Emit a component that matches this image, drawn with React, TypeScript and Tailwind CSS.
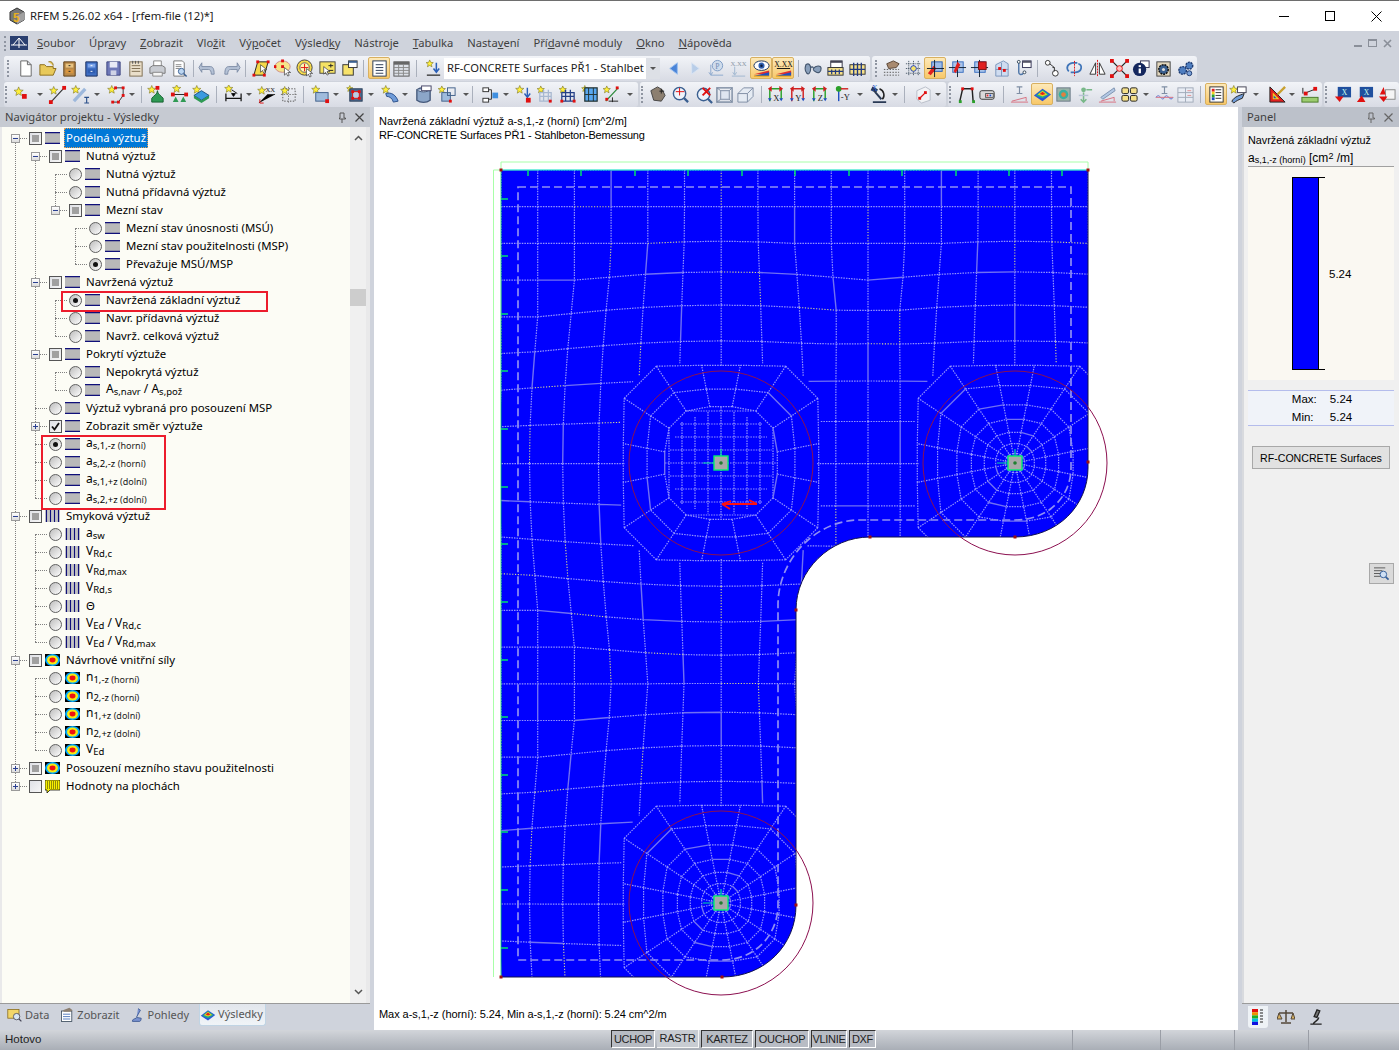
import type { ReactNode } from 'react';

const star = (cx: number, cy: number, r = 4) => {
  const pts: string[] = [];
  for (let i = 0; i < 10; i++) {
    const a = -Math.PI / 2 + (i * Math.PI) / 5;
    const d = i % 2 ? r * 0.45 : r;
    pts.push(`${(cx + d * Math.cos(a)).toFixed(1)},${(cy + d * Math.sin(a)).toFixed(1)}`);
  }
  return pts.join(' ');
};
const St = ({ x = 5, y = 5, r = 4 }: { x?: number; y?: number; r?: number }) => (
  <polygon points={star(x, y, r)} fill="#fff03a" stroke="#77701e" strokeWidth=".6" />
);
const Rd = ({ x, y, s = 3 }: { x: number; y: number; s?: number }) => <rect x={x - s / 2} y={y - s / 2} width={s} height={s} fill="#e01010" />;
const Cur = ({ x = 11, y = 10 }: { x?: number; y?: number }) => (
  <path d={`M${x} ${y}l0 8 2-2 1.5 3 1.5-.8-1.5-3h3z`} fill="#fff" stroke="#333" strokeWidth=".7" />
);
const Label = ({ t, x = 10, y = 9, c = '#222', s = 7 }: { t: string; x?: number; y?: number; c?: string; s?: number }) => (
  <text x={x} y={y} textAnchor="middle" fontSize={s} fontFamily="Liberation Serif, serif" fill={c}>{t}</text>
);
const Frame = ({ c = '#3a6fc0' }: { c?: string }) => (
  <>
    <rect x="5" y="3" width="11" height="11" fill="#a9c4ea" stroke={c} />
    <path d="M10 1v18M1 9h18" stroke="#123" strokeWidth="1" />
  </>
);
const Bars = ({ c = '#e8a100' }: { c?: string }) => (
  <>
    <path d="M2 16L18 12V16H2Z" fill="#e03030" />
    <path d="M2 18L18 14V18H2Z" fill="#2050c0" />
    <path d="M2 18H18" stroke={c} />
  </>
);
const Axis = ({ t, up = '#2aa02a', side = '#d02020' }: { t: string; up?: string; side?: string }) => (
  <>
    <path d="M4 17V4M4 4H16M16 4V15" stroke={up} strokeWidth="1.5" fill="none" />
    <path d="M2 4l4-3v6zM18 4l-4-3v6z" fill={side} />
    <path d="M4 17l-2-3h4zM16 17l-2-3h4z" fill="#2050c0" />
    <Label t={t} x={11} y={17} s={9} />
  </>
);
const Contour = () => (
  <>
    <path d="M1 11L10 4L19 10L10 17Z" fill="#2a55d8" />
    <path d="M3 11L10 5L17 10L10 14Z" fill="#20b080" />
    <path d="M5 10L10 6L15 10L10 12Z" fill="#f0d020" />
    <path d="M7 9.5L10 7L13 9.5L10 10.5Z" fill="#e02020" />
  </>
);

const ICONS: Record<string, ReactNode> = {
  doc: <path d="M5 2h7l4 4v12H5zM12 2v4h4" fill="#fff" stroke="#666" />,
  folder: <path d="M2 17V6h5l2 2h7v2h3l-3 7zM16 7c0-3-2-5-5-4" fill="#e8c95a" stroke="#8a6d1e" />,
  cabBrown: <><path d="M4 3h12v15H4z" fill="#b98a4a" stroke="#5c3c15" /><rect x="6" y="5" width="8" height="4" fill="#e8c483" /><rect x="6" y="11" width="8" height="4" fill="#d9963f" /><path d="M9 7h2M9 13h2" stroke="#222" /></>,
  cabBlue: <><path d="M4 3h12v15H4z" fill="#3f6fc4" stroke="#1a2f60" /><rect x="6" y="5" width="8" height="4" fill="#7ea6ea" /><rect x="6" y="11" width="8" height="4" fill="#2f5db0" /><path d="M9 7h2M9 13h2" stroke="#fff" /></>,
  save: <><path d="M3 3h14v14H3z" fill="#6e78b8" stroke="#3e4680" /><rect x="6" y="3" width="8" height="6" fill="#e8eaf6" /><rect x="7" y="12" width="6" height="5" fill="#cfd3e6" /></>,
  notes: <><rect x="4" y="3" width="13" height="15" fill="#eadfca" stroke="#7d6d50" /><path d="M6 7h9M6 10h9M6 13h9" stroke="#7d6d50" /><path d="M7 2v3M10 2v3M13 2v3" stroke="#555" /></>,
  print: <><path d="M6 2h8v6H6z" fill="#fff" stroke="#888" /><path d="M2 9l3-2h10l3 2v6H2z" fill="#c9ccd2" stroke="#777" /><path d="M5 14h10v4H5z" fill="#f5f5f5" stroke="#888" /></>,
  preview: <><path d="M4 2h9l2 2v14H4z" fill="#fff" stroke="#777" /><path d="M6 6h6M6 8h6M6 10h4" stroke="#888" /><circle cx="12" cy="13" r="3.2" fill="#bcd6f2" stroke="#3a5f90" /><path d="M14.5 15.5l3 3" stroke="#3a5f90" strokeWidth="1.6" /></>,
  undo: <path d="M4 8h9c3 0 4 3 4 8h-3c0-3-1-5-3-5H4v3L1 9l3-5z" fill="#b5c2d6" stroke="#7d8ca5" />,
  redo: <path d="M16 8H7c-3 0-4 3-4 8h3c0-3 1-5 3-5h7v3l3-5-3-5z" fill="#b5c2d6" stroke="#7d8ca5" />,
  para: <><path d="M6 3h11l-4 14H2z" fill="#f5d94a" stroke="#222" /><Rd x={6} y={3} /><Rd x={17} y={3} /><Rd x={2} y={17} /><Rd x={13} y={17} /><Cur x={9} y={6} /></>,
  ell: <><ellipse cx="9" cy="8" rx="8" ry="6" fill="#f5e58a" stroke="#c88" /><Rd x={9} y={2} /><Rd x={1} y={8} /><Rd x={9} y={8} /><Cur x={11} y={9} /></>,
  target: <><circle cx="9" cy="9" r="8" fill="#f5d94a" stroke="#444" /><circle cx="9" cy="9" r="5" fill="#fff6b0" stroke="#666" /><path d="M5 9h8M9 5v8" stroke="#e01010" /><Cur x={11} y={10} /></>,
  notePlus: <><rect x="2" y="3" width="16" height="12" fill="#f5e263" stroke="#444" /><path d="M11 7h5M13.5 5v4M11 12h5" stroke="#222" /><Cur x={6} y={8} /></>,
  winY: <><rect x="3" y="6" width="11" height="11" fill="#f7e26b" stroke="#333" /><rect x="9" y="2" width="9" height="7" fill="#fff" stroke="#333" /><rect x="9" y="2" width="9" height="2" fill="#3a5f90" /></>,
  list: <><rect x="3" y="2" width="14" height="16" fill="#fff" stroke="#2a3a55" /><path d="M6 6h8M6 9h8M6 12h8M6 15h8" stroke="#2a3a55" /></>,
  table: <><rect x="2" y="3" width="16" height="15" fill="#dde1e8" stroke="#555" /><rect x="2" y="3" width="16" height="3" fill="#666" /><path d="M2 9h16M2 12h16M2 15h16M7 6v12M12 6v12" stroke="#888" /></>,
  starDown: <><St x={6} y={5} /><path d="M13 4v9M10 10l3 4 3-4" stroke="#2a5fb8" strokeWidth="1.6" fill="none" /><path d="M3 17h14" stroke="#333" strokeWidth="1.4" /></>,
  triL: <path d="M13 4v12L5 10z" fill="#4a84d8" stroke="#9cc0ee" />,
  triR: <path d="M7 4v12l8-6z" fill="#b8cde8" stroke="#d8e4f2" />,
  pDown: <><circle cx="11" cy="7" r="5.5" fill="#cfdcec" stroke="#7d9cc4" /><Label t="P" x={11} y={10} c="#6f8cb5" s={8} /><path d="M4 6v10M2 14l2 3 2-3M4 17h13" stroke="#8aa8cc" fill="none" /></>,
  xxPale: <><Label t="X.XX" y={7} c="#8c98a8" s={7} /><path d="M6 8v8M4 14l2 3 2-3M3 18h14" stroke="#9fb6d0" fill="none" /></>,
  eye: <><ellipse cx="10" cy="7" rx="8" ry="5" fill="#fff" stroke="#16305f" /><circle cx="10" cy="7" r="3.2" fill="#2f5fb0" /><circle cx="10" cy="7" r="1.3" fill="#0a1a3a" /><Bars /></>,
  xxHl: <><Label t="X.XX" y={8} c="#111" s={8} /><path d="M3 10h14" stroke="#111" /><Bars /></>,
  glasses: <path d="M2 6c3-2 5 0 5 4s-2 7-4 5-2-6-1-9zM10 10c2-3 8-4 8 0s-3 5-5 4-4-2-3-4zM7 9c1-1 2-1 3 0" fill="#8aa0bc" stroke="#45576f" strokeWidth="1.2" />,
  winBlocks: <><rect x="5" y="2" width="12" height="7" fill="#fff" stroke="#334" /><rect x="5" y="2" width="12" height="2" fill="#445" /><rect x="2" y="9" width="16" height="8" fill="#f5e08a" stroke="#333" /><path d="M6 11v5M10 11v5M14 11v5M2 13h16" stroke="#223a80" strokeWidth="1.3" /></>,
  blocks: <><rect x="2" y="6" width="16" height="10" fill="#f5e08a" stroke="#333" /><path d="M6 4v14M10 4v14M14 4v14M2 11h16" stroke="#223a80" strokeWidth="1.4" /></>,
  handGrid: <><path d="M5 5l7-3 6 3-3 4-8 1z" fill="#a88a70" stroke="#5a4636" /><path d="M2 11h16M2 14h16M2 17h16" stroke="#555" strokeDasharray="1.5 1.5" /></>,
  sunGrid: <><path d="M2 5h16M2 10h16M2 15h16M5 2v16M10 2v16M15 2v16" stroke="#345" strokeDasharray="1 1" /><circle cx="10" cy="10" r="3" fill="#f5e26b" stroke="#2040c0" /></>,
  frameA: <><rect x="6" y="3" width="11" height="10" fill="#9dbde8" stroke="#2a5fb8" /><path d="M2 15l6-8 3 3-6 7z" fill="#e02020" /><path d="M9 1v18M1 10h18" stroke="#123" /></>,
  frameB: <><Frame /><path d="M6 13l4-10 3 3-5 9z" fill="#e02020" /></>,
  frameC: <><Frame /><rect x="9" y="3" width="8" height="8" fill="#e02020" stroke="#801010" /></>,
  gridRed: <><path d="M4 6l8-4 5 3v13H4z" fill="#cfdcf0" stroke="#7a96bc" /><path d="M4 11h13M10 4v14" stroke="#7a96bc" /><Rd x={8} y={10} /><Rd x={13} y={12} /></>,
  chainWin: <><rect x="9" y="2" width="9" height="7" fill="#fff" stroke="#335" /><rect x="9" y="2" width="9" height="2" fill="#556" /><path d="M5 4v10M5 14c0 3 3 3 5 1" stroke="#4f76a8" strokeWidth="1.5" fill="none" /><circle cx="5" cy="3" r="1.5" fill="#fff" stroke="#345" /><circle cx="11" cy="14" r="1.5" fill="#fff" stroke="#345" /></>,
  chain: <><circle cx="5" cy="4" r="2.5" fill="#fff" stroke="#333" /><circle cx="13" cy="15" r="3" fill="#fff" stroke="#333" /><path d="M7 5l5 4v4M10 9l2 0" stroke="#333" fill="none" /></>,
  rotate: <><path d="M14 5c4 1 5 8-3 9H6M4 13c-3-3-2-8 4-9h5" stroke="#3f74b8" strokeWidth="1.8" fill="none" /><path d="M10 2v16" stroke="#e01010" strokeDasharray="2 1" /></>,
  mirror: <><path d="M8 4L2 16h6zM12 4l6 12h-6z" fill="#fff" stroke="#333" /><path d="M10 1v18" stroke="#e01010" strokeDasharray="2 1" /></>,
  xNodes: <><path d="M2 2l16 16M18 2L2 18" stroke="#222" strokeWidth="1.3" /><circle cx="10" cy="10" r="3" fill="#fbb" stroke="#e01010" /><Rd x={2} y={2} s={4} /><Rd x={18} y={2} s={4} /><Rd x={2} y={18} s={4} /><Rd x={18} y={18} s={4} /></>,
  info: <><rect x="9" y="2" width="9" height="7" fill="#fff" stroke="#335" /><circle cx="8" cy="11" r="7" fill="#14275e" /><rect x="7" y="10" width="2.4" height="5" fill="#fff" /><rect x="7" y="6.5" width="2.4" height="2" fill="#fff" /></>,
  gearBox: <><rect x="3" y="3" width="14" height="15" fill="#e2d6bd" stroke="#444" /><circle cx="10" cy="11" r="5" fill="#3a5f90" stroke="#111" strokeWidth="1.5" strokeDasharray="2 1" /><circle cx="10" cy="11" r="1.6" fill="#ddd" /></>,
  gears: <><circle cx="7" cy="12" r="4" fill="#4f7ec0" stroke="#1e3a70" strokeWidth="1.5" strokeDasharray="2 1" /><circle cx="14" cy="7" r="3.6" fill="#4f7ec0" stroke="#1e3a70" strokeWidth="1.5" strokeDasharray="2 1" /><circle cx="14" cy="15" r="2.6" fill="#7aa0d8" stroke="#1e3a70" /></>,
  node: <><St x={7} y={7} r={5} /><Rd x={13} y={12} s={5} /></>,
  line: <><St x={6} y={6} r={4.5} /><path d="M4 17L16 4" stroke="#333" strokeWidth="1.2" /><Rd x={3} y={18} s={4} /><Rd x={17} y={3} s={4} /></>,
  lineI: <><St x={5} y={5} r={4.5} /><path d="M3 17L15 4" stroke="#9db8dc" strokeWidth="3.5" /><path d="M14 13h5M14 19h5M16.5 13v6" stroke="#2a4f8a" strokeWidth="1.2" /></>,
  poly: <><St x={5} y={5} r={4.5} /><path d="M9 3h8v8l-5 7H6" stroke="#333" fill="none" /><Rd x={9} y={3} /><Rd x={17} y={3} /><Rd x={17} y={11} /><Rd x={12} y={18} /><Rd x={6} y={18} /></>,
  support: <><St x={5} y={5} r={4.5} /><Rd x={11} y={3} s={4} /><path d="M11 6c0 4-4 5-6 8v4h12v-4c-2-3-6-4-6-8z" fill="#2f9a54" stroke="#14602f" /></>,
  supports2: <><St x={7} y={4} r={4.5} /><path d="M3 10h14" stroke="#222" /><Rd x={3} y={10} s={4} /><Rd x={17} y={10} s={4} /><path d="M6 12l3 6H3zM14 12l3 6h-6z" fill="#2f9a54" /></>,
  foundation: <><St x={5} y={5} r={4.5} /><path d="M2 11l8-5 8 5-8 5z" fill="#3a9ae0" stroke="#1a4f80" /><path d="M2 11v3l8 5 8-5v-3l-8 5z" fill="#2f9a54" /></>,
  dim: <><St x={5} y={4} r={4.5} /><path d="M2 9v8M18 9v8M2 14h16" stroke="#111" strokeWidth="1.3" /><path d="M8 9l4 0-2 3zM8 5l6 4" stroke="#111" /></>,
  dimXX: <><St x={5} y={6} r={4.5} /><Label t="XX" x={14} y={7} s={7} /><path d="M2 19l9-9h8" stroke="#333" /><path d="M3 15v4h4" stroke="#e01010" fill="none" /></>,
  gridStar: <><rect x="4" y="4" width="13" height="13" fill="none" stroke="#555" strokeDasharray="1.5 1.5" /><path d="M10 2v17M2 10h17" stroke="#777" strokeDasharray="1.5 1.5" /><St x={6} y={6} r={4.5} /></>,
  rectStar: <><St x={5} y={5} r={4.5} /><rect x="5" y="8" width="13" height="9" fill="#9fbbdc" stroke="#40608a" /><Rd x={17} y={17} s={4} /></>,
  frameRed: <><St x={4} y={4} r={3.5} /><rect x="4" y="4" width="13" height="13" fill="#4c6a90" stroke="#253a55" /><rect x="7" y="7" width="7" height="7" fill="#b9cee6" stroke="#e01010" /><Rd x={7} y={7} /><Rd x={14} y={7} /><Rd x={7} y={14} /><Rd x={14} y={14} /></>,
  curve: <><St x={5} y={5} r={4.5} /><path d="M5 9c6-2 11 2 13 8l-5 1C12 14 9 12 6 12z" fill="#6f9bd8" stroke="#2a4f8a" /></>,
  cube: <><path d="M3 5c4-3 10-3 14 0v11c-4 3-10 3-14 0z" fill="#8ca6c8" stroke="#44587a" strokeWidth="1.4" /><path d="M3 5c4 3 10 3 14 0" fill="#dfe7f2" stroke="#44587a" /><rect x="8" y="1" width="10" height="5" fill="#fff" stroke="#446" /></>,
  cubeStar: <><St x={4} y={5} r={4} /><rect x="4" y="8" width="9" height="9" fill="#9fbbdc" stroke="#40608a" /><rect x="10" y="3" width="8" height="8" fill="none" stroke="#40608a" /><Rd x={13} y={17} /></>,
  arrowsBox: <><rect x="2" y="3" width="6" height="4" fill="#fff" stroke="#333" /><rect x="2" y="14" width="6" height="4" fill="#fff" stroke="#333" /><rect x="12" y="8" width="6" height="6" fill="#3f8fe0" /><path d="M8 5h3v10H8" stroke="#333" fill="none" /></>,
  starDownR: <><St x={5} y={5} r={4.5} /><path d="M13 3v9M10 9l3 4 3-4" stroke="#2a5fb8" strokeWidth="1.5" fill="none" /><Rd x={14} y={16} s={5} /></>,
  framePale: <><St x={5} y={5} r={4} /><path d="M4 8h12v9H4zM8 5v12M13 5v12M4 12h12" stroke="#a8b8d0" fill="none" strokeWidth="1.3" /><Rd x={15} y={17} s={3} /></>,
  frameS: <><St x={5} y={5} r={4} /><path d="M4 8h13v9H4zM8 5v12M13 5v12M4 12h13" stroke="#243f86" fill="none" strokeWidth="1.3" /><Rd x={4} y={17} /><Rd x={17} y={17} /></>,
  frameSky: <><St x={4} y={4} r={3.5} /><rect x="4" y="3" width="13" height="14" fill="#59a8f0" stroke="#233" strokeWidth="1.3" /><path d="M8 3v14M13 3v14M4 10h13" stroke="#233" /></>,
  xyStar: <><St x={5} y={5} r={4} /><path d="M4 17L17 3" stroke="#2a8a3a" strokeWidth="1.3" /><Rd x={16} y={3} /><path d="M7 17h10M11 13v5" stroke="#222" /><Rd x={5} y={15} /></>,
  handPale: <><path d="M3 6l7-4 5 3 3 6-4 6-8-1z" fill="#8c7f70" stroke="#444" /><path d="M14 4v5M12 6.5h5" stroke="#222" /></>,
  zoomP: <><circle cx="9" cy="9" r="6.5" fill="#eef4fb" stroke="#3a5f90" strokeWidth="1.5" /><path d="M13.5 13.5L18 18" stroke="#3a5f90" strokeWidth="2.4" /><path d="M5 7h9M9 3v8" stroke="#e01010" /></>,
  zoomX: <><circle cx="9" cy="10" r="6.5" fill="#eef4fb" stroke="#3a5f90" strokeWidth="1.5" /><path d="M13.5 14.5L18 19" stroke="#3a5f90" strokeWidth="2.4" /><path d="M8 3l8 8M16 3l-8 8" stroke="#e01010" strokeWidth="2" /></>,
  box: <><rect x="2" y="3" width="16" height="15" fill="none" stroke="#7f8ea4" strokeWidth="1.5" /><rect x="6" y="6" width="9" height="9" fill="#dfe6f0" stroke="#7f8ea4" /><path d="M2 3l4 3M18 3l-3 3M2 18l4-3M18 18l-3-3" stroke="#7f8ea4" /></>,
  box2: <><path d="M2 9h10v9H2zM2 9l6-6h10v9l-6 6M12 9l6-6" fill="#e5ebf3" stroke="#7f8ea4" /></>,
  aX: <Axis t="X" />,
  aY: <Axis t="Y" up="#d02020" side="#d02020" />,
  aZ: <Axis t="Z" up="#2aa02a" side="#d02020" />,
  aMY: <><path d="M6 17V5" stroke="#2050c0" strokeWidth="1.5" /><circle cx="6" cy="4" r="3" fill="#2aa02a" /><path d="M8 4h8" stroke="#d02020" strokeWidth="1.5" /><Label t="-Y" x={13} y={16} s={9} /></>,
  micro: <><path d="M3 3l4 2-1 2-4-2zM5 7l7 8M3 18h14" stroke="#2a3a55" strokeWidth="2" /><path d="M10 4c5 2 6 8 3 11" stroke="#222" strokeWidth="1.6" fill="none" /><Label t="X" x={5} y={6} c="#2a5fd0" s={8} /></>,
  boxPale: <><path d="M3 6l9-4 5 3v11l-9 3-5-4z" fill="#f2f3f6" stroke="#b8bec8" /><path d="M6 14l6-6" stroke="#e01010" strokeWidth="1.3" /><Rd x={12} y={8} /><Rd x={6} y={14} /></>,
  legs: <><path d="M4 17L7 4h10l1 13" stroke="#222" strokeWidth="1.5" fill="none" /><Rd x={7} y={4} /><Rd x={17} y={4} /><rect x="3" y="16" width="3" height="3" fill="#2aa02a" /><rect x="17" y="16" width="3" height="3" fill="#2aa02a" /></>,
  cam: <><rect x="2" y="6" width="15" height="9" rx="2" fill="#d9d9d9" stroke="#333" /><rect x="8" y="9" width="8" height="4" fill="#f0f0f0" stroke="#555" /><rect x="9" y="10" width="2" height="2" fill="#e03030" /><rect x="12" y="10" width="2" height="2" fill="#2050c0" /></>,
  dimPale: <><path d="M7 2h6M7 9h6M10 2v7" stroke="#7f8ea4" strokeWidth="1.2" /><path d="M1 18h18M2 17l15-4v4" stroke="#d87080" fill="none" /></>,
  surface: <Contour />,
  cubeColor: <><rect x="3" y="3" width="14" height="14" fill="#9ab3a8" stroke="#6b7a88" /><circle cx="10" cy="10" r="5" fill="#3ab0a0" /><circle cx="10" cy="10" r="2.5" fill="#e08040" /></>,
  arrowsG: <><circle cx="9" cy="5" r="2.5" fill="#79b889" /><path d="M9 8v10M6 15l3 3 3-3M12 5h6" stroke="#79b889" strokeWidth="1.6" fill="none" /><path d="M4 11h10" stroke="#b8c4d4" strokeWidth="1.5" /></>,
  lineR: <><path d="M3 13L17 3l1 3L5 15z" fill="#b3c8e4" stroke="#7d92b0" /><path d="M1 18h18M3 17l14-4v4" stroke="#d87080" fill="none" /></>,
  squares: <><rect x="2" y="3" width="7" height="6" rx="1.5" fill="#f5e08a" stroke="#222" /><rect x="11" y="3" width="7" height="6" rx="1.5" fill="#f5e08a" stroke="#222" /><rect x="2" y="11" width="7" height="6" rx="1.5" fill="#f5e08a" stroke="#222" /><rect x="11" y="11" width="7" height="6" rx="1.5" fill="#f5e08a" stroke="#222" /></>,
  wave: <><path d="M7 2h6M7 9h6M10 2v7" stroke="#7f8ea4" strokeWidth="1.2" /><path d="M1 13c4-6 6 6 9 0s6 6 9 0" stroke="#5a6fd0" fill="none" /><path d="M1 13h18" stroke="#d87080" /></>,
  tablePale: <><rect x="2" y="3" width="16" height="15" fill="#e8ecf4" stroke="#a0aab8" /><path d="M2 8h16M2 13h16M10 3v15" stroke="#a0aab8" /><path d="M12 6h4M12 11h4" stroke="#e09090" /></>,
  listColor: <><rect x="3" y="2" width="14" height="16" fill="#fff" stroke="#333" /><rect x="5" y="4" width="3" height="3" fill="#e02020" /><rect x="5" y="7" width="3" height="3" fill="#f0d020" /><rect x="5" y="10" width="3" height="3" fill="#2aa02a" /><rect x="5" y="13" width="3" height="3" fill="#2050c0" /><path d="M9 5h6M9 8h6M9 11h6M9 14h6" stroke="#333" /></>,
  starWin: <><St x={5} y={5} r={4.5} /><rect x="9" y="2" width="9" height="6" fill="#fff" stroke="#445" /><path d="M3 17c3-5 8-6 13-8l-2 5c-3 1-7 3-9 5z" fill="#6f9bd8" stroke="#222" /></>,
  rainbow: <><path d="M2 2v16h16z" fill="#e02020" stroke="#222" /><path d="M5 8v7h7z" fill="#f0d020" /><path d="M6 11v3h3z" fill="#2050c0" /><path d="M10 10l8-8" stroke="#c8a030" strokeWidth="2.5" /></>,
  ruler: <><path d="M4 9L17 4" stroke="#222" /><Rd x={6} y={9} s={4} /><Rd x={16} y={4} s={4} /><path d="M3 3v6" stroke="#222" /><rect x="2" y="13" width="17" height="5" fill="#9ccc6f" stroke="#4a7a2a" /></>,
  nodeA: <><rect x="5" y="2" width="14" height="11" fill="#1f4f9e" /><Label t="X" x={12} y={10} c="#cfe" s={8} /><path d="M2 12h9l-4 6z" fill="#e01010" /></>,
  nodeB: <><rect x="5" y="2" width="14" height="11" fill="#1f4f9e" /><Label t="X" x={12} y={10} c="#cfe" s={8} /><path d="M2 18h9l-4-7z" fill="#e01010" /></>,
  nodeC: <><rect x="9" y="5" width="10" height="10" fill="#f5f5f5" stroke="#888" /><path d="M7 2l2 8H3zM2 12h9l-4 6z" fill="#e01010" /></>,
};

type Item = [number, string];

// x is the centre of the item on the page
function Strip({ start, end, items }: { start: number; end: number; items: Item[] }) {
  let cursor = start;
  return (
    <div className="flex h-[25px] items-center rounded-[3px] bg-linear-to-b from-[#f2f4f8] to-[#d8dbe4]" style={{ width: end - start }}>
      {items.map(([x, name], i) => {
        const w = name === 'sep' ? 1 : name === 'grip' ? 2 : name === 'caret' ? 6 : 22;
        const ml = x - w / 2 - cursor;
        cursor = x + w / 2;
        if (name === 'sep') return <div key={i} className="h-[17px] w-px shrink-0 bg-[#aab0bc]" style={{ marginLeft: ml }} />;
        if (name === 'grip') return <div key={i} className="h-[17px] w-[2px] shrink-0 border-l-2 border-dotted border-[#8f95a1]" style={{ marginLeft: ml }} />;
        if (name === 'caret') return <div key={i} className="h-0 w-0 shrink-0 border-x-[3px] border-t-[3px] border-x-transparent border-t-[#555]" style={{ marginLeft: ml }} />;
        const hl = name.startsWith('*');
        const key = hl ? name.slice(1) : name;
        return (
          <div
            key={i}
            className={hl
              ? 'flex h-[22px] w-[22px] shrink-0 items-center justify-center rounded-[2px] border border-[#d8b060] bg-linear-to-b from-[#fde9b8] to-[#f8c868]'
              : 'flex h-[22px] w-[22px] shrink-0 items-center justify-center'}
            style={{ marginLeft: ml }}
          >
            <svg viewBox="0 0 20 20" className="h-[19px] w-[19px]" strokeWidth="1">{ICONS[key]}</svg>
          </div>
        );
      })}
    </div>
  );
}

const ROW1A: Item[] = [[8, 'grip'], [25, 'doc'], [47, 'folder'], [69, 'cabBrown'], [91, 'cabBlue'], [113, 'save'], [135, 'notes'], [157, 'print'], [179, 'preview'], [193, 'sep'], [207, 'undo'], [231, 'redo'], [245, 'sep'], [261, 'para'], [283, 'ell'], [305, 'target'], [327, 'notePlus'], [349, 'winY'], [363, 'sep'], [379, '*list'], [401, 'table'], [416, 'sep']];
const ROW1A2: Item[] = [[674, 'triL'], [694, 'triR'], [716, 'pDown'], [738, 'xxPale'], [761, '*eye'], [783, '*xxHl'], [798, 'sep'], [813, 'glasses'], [835, 'winBlocks'], [857, 'blocks']];
const ROW1B: Item[] = [[876, 'grip'], [891, 'handGrid'], [913, 'sunGrid'], [935, '*frameA'], [957, 'frameB'], [979, 'frameC'], [1001, 'gridRed'], [1023, 'chainWin'], [1037, 'sep'], [1052, 'chain'], [1074, 'rotate'], [1097, 'mirror'], [1119, 'xNodes'], [1141, 'info'], [1163, 'gearBox'], [1185, 'gears']];
const ROW2A: Item[] = [[6, 'grip'], [21, 'node'], [40, 'caret'], [57, 'line'], [80, 'lineI'], [97, 'caret'], [116, 'poly'], [132, 'caret'], [141, 'sep'], [156, 'support'], [179, 'supports2'], [201, 'foundation'], [216, 'sep'], [233, 'dim'], [249, 'caret'], [266, 'dimXX'], [288, 'gridStar'], [303, 'sep'], [320, 'rectStar'], [336, 'caret'], [355, 'frameRed'], [371, 'caret'], [390, 'curve'], [405, 'caret'], [423, 'cube'], [447, 'cubeStar'], [466, 'caret'], [472, 'sep'], [490, 'arrowsBox'], [506, 'caret'], [524, 'starDownR'], [545, 'framePale'], [567, 'frameS'], [590, 'frameSky'], [611, 'xyStar'], [630, 'caret']];
const ROW2B: Item[] = [[642, 'grip'], [657, 'handPale'], [680, 'zoomP'], [704, 'zoomX'], [724, 'box'], [745, 'box2'], [761, 'sep'], [775, 'aX'], [797, 'aY'], [819, 'aZ'], [842, 'aMY'], [860, 'caret'], [879, 'micro'], [895, 'caret'], [904, 'sep'], [923, 'boxPale'], [938, 'caret']];
const ROW2C: Item[] = [[950, 'grip'], [965, 'legs'], [987, 'cam'], [1003, 'sep'], [1019, 'dimPale'], [1042, '*surface'], [1063, 'cubeColor'], [1084, 'arrowsG'], [1107, 'lineR'], [1129, 'squares'], [1146, 'caret'], [1164, 'wave'], [1185, 'tablePale'], [1200, 'sep'], [1216, '*listColor'], [1238, 'starWin'], [1256, 'caret'], [1277, 'rainbow'], [1292, 'caret'], [1309, 'ruler']];
const ROW2D: Item[] = [[1326, 'grip'], [1342, 'nodeA'], [1364, 'nodeB'], [1386, 'nodeC']];

const MENU: [string, string, string][] = [
  ['', 'S', 'oubor'], ['Úpr', 'a', 'vy'], ['', 'Z', 'obrazit'], ['Vlo', 'ž', 'it'], ['Vý', 'p', 'očet'], ['Výsled', 'k', 'y'],
  ['Nástro', 'j', 'e'], ['', 'T', 'abulka'], ['Nasta', 'v', 'ení'], ['Pří', 'd', 'avné moduly'], ['', 'O', 'kno'], ['', 'N', 'ápověda'],
];

function BarsIcon() {
  return (
    <svg viewBox="0 0 15 12" className="h-[12px] w-[15px] shrink-0">
      <rect width="15" height="12" fill="#b9b9b9" />
      <path d="M0 .7h15M0 11.300h15" stroke="#10107a" strokeWidth="1.300" />
    </svg>
  );
}
function StirrupIcon() {
  return (
    <svg viewBox="0 0 15 12" className="h-[12px] w-[15px] shrink-0">
      <rect width="15" height="12" fill="#c4c4c4" />
      <path d="M1.500 0v12M5.500 0v12M9.500 0v12M13.500 0v12" stroke="#10107a" strokeWidth="1.100" />
    </svg>
  );
}
function ContourIcon() {
  return (
    <svg viewBox="0 0 15 12" className="h-[12px] w-[15px] shrink-0">
      <rect width="15" height="12" fill="#000" />
      <ellipse cx="7.500" cy="6" rx="7.500" ry="6" fill="#00a8ff" />
      <ellipse cx="7.500" cy="6" rx="5.500" ry="4.500" fill="#f6ea10" />
      <ellipse cx="7.500" cy="6" rx="3" ry="2.400" fill="#f01010" />
    </svg>
  );
}
function DotsIcon() {
  return (
    <svg viewBox="0 0 15 13" className="h-[13px] w-[15px] shrink-0">
      <path d="M0 0h15v10H5l-3 3v-3H0z" fill="#f7f000" stroke="#111" strokeWidth=".8" />
      <path d="M2 2h11M2 4h11M2 6h11M2 8h11" stroke="#111" strokeWidth=".9" strokeDasharray="1 1" />
    </svg>
  );
}

type Seg = [string, 'm' | 's' | 'n'];
type TreeRow = {
  level: number;
  kind: 'radio' | 'on' | 'mixed' | 'check' | 'empty';
  icon: 'bars' | 'stir' | 'cont' | 'dots';
  text: string | Seg[];
  exp?: '-' | '+';
  sel?: boolean;
};
const rAs = (a: string, b: string): Seg[] => [['a', 'm'], [a, 's'], [b, 'n']];
const rN = (a: string, b: string): Seg[] => [['n', 'm'], [a, 's'], [b, 'n']];
const ROWS: TreeRow[] = [
  { level: 0, kind: 'mixed', icon: 'bars', text: 'Podélná výztuž', exp: '-', sel: true },
  { level: 1, kind: 'mixed', icon: 'bars', text: 'Nutná výztuž', exp: '-' },
  { level: 2, kind: 'radio', icon: 'bars', text: 'Nutná výztuž' },
  { level: 2, kind: 'radio', icon: 'bars', text: 'Nutná přídavná výztuž' },
  { level: 2, kind: 'mixed', icon: 'bars', text: 'Mezní stav', exp: '-' },
  { level: 3, kind: 'radio', icon: 'bars', text: 'Mezní stav únosnosti (MSÚ)' },
  { level: 3, kind: 'radio', icon: 'bars', text: 'Mezní stav použitelnosti (MSP)' },
  { level: 3, kind: 'on', icon: 'bars', text: 'Převažuje MSÚ/MSP' },
  { level: 1, kind: 'mixed', icon: 'bars', text: 'Navržená výztuž', exp: '-' },
  { level: 2, kind: 'on', icon: 'bars', text: 'Navržená základní výztuž' },
  { level: 2, kind: 'radio', icon: 'bars', text: 'Navr. přídavná výztuž' },
  { level: 2, kind: 'radio', icon: 'bars', text: 'Navrž. celková výztuž' },
  { level: 1, kind: 'mixed', icon: 'bars', text: 'Pokrytí výztuže', exp: '-' },
  { level: 2, kind: 'radio', icon: 'bars', text: 'Nepokrytá výztuž' },
  { level: 2, kind: 'radio', icon: 'bars', text: [['A', 'm'], ['s,navr', 's'], [' / A', 'm'], ['s,pož', 's']] },
  { level: 1, kind: 'radio', icon: 'bars', text: 'Výztuž vybraná pro posouzení MSP' },
  { level: 1, kind: 'check', icon: 'bars', text: 'Zobrazit směr výztuže', exp: '+' },
  { level: 1, kind: 'on', icon: 'bars', text: rAs('s,1,-z', ' (horní)') },
  { level: 1, kind: 'radio', icon: 'bars', text: rAs('s,2,-z', ' (horní)') },
  { level: 1, kind: 'radio', icon: 'bars', text: rAs('s,1,+z', ' (dolní)') },
  { level: 1, kind: 'radio', icon: 'bars', text: rAs('s,2,+z', ' (dolní)') },
  { level: 0, kind: 'mixed', icon: 'stir', text: 'Smyková výztuž', exp: '-' },
  { level: 1, kind: 'radio', icon: 'stir', text: [['a', 'm'], ['sw', 's']] },
  { level: 1, kind: 'radio', icon: 'stir', text: [['V', 'm'], ['Rd,c', 's']] },
  { level: 1, kind: 'radio', icon: 'stir', text: [['V', 'm'], ['Rd,max', 's']] },
  { level: 1, kind: 'radio', icon: 'stir', text: [['V', 'm'], ['Rd,s', 's']] },
  { level: 1, kind: 'radio', icon: 'stir', text: 'Θ' },
  { level: 1, kind: 'radio', icon: 'stir', text: [['V', 'm'], ['Ed', 's'], [' / V', 'm'], ['Rd,c', 's']] },
  { level: 1, kind: 'radio', icon: 'stir', text: [['V', 'm'], ['Ed', 's'], [' / V', 'm'], ['Rd,max', 's']] },
  { level: 0, kind: 'mixed', icon: 'cont', text: 'Návrhové vnitřní síly', exp: '-' },
  { level: 1, kind: 'radio', icon: 'cont', text: rN('1,-z', ' (horní)') },
  { level: 1, kind: 'radio', icon: 'cont', text: rN('2,-z', ' (horní)') },
  { level: 1, kind: 'radio', icon: 'cont', text: rN('1,+z', ' (dolní)') },
  { level: 1, kind: 'radio', icon: 'cont', text: rN('2,+z', ' (dolní)') },
  { level: 1, kind: 'radio', icon: 'cont', text: [['V', 'm'], ['Ed', 's']] },
  { level: 0, kind: 'mixed', icon: 'cont', text: 'Posouzení mezního stavu použitelnosti', exp: '+' },
  { level: 0, kind: 'empty', icon: 'dots', text: 'Hodnoty na plochách', exp: '+' },
];

// vertical connectors: x, first row, last row
const GUIDES: [number, number, number][] = [[15, 0, 36], [35, 1, 20], [55, 2, 4], [75, 5, 7], [55, 9, 11], [55, 13, 14], [35, 22, 28], [35, 30, 34]];

function Mark({ kind }: { kind: TreeRow['kind'] }) {
  if (kind === 'radio' || kind === 'on') {
    return (
      <div className="flex h-[13px] w-[13px] shrink-0 items-center justify-center rounded-full border border-[#606060] bg-linear-to-br from-[#bdbdbd] to-white">
        {kind === 'on' && <div className="h-[5px] w-[5px] rounded-full bg-[#111]" />}
      </div>
    );
  }
  return (
    <div className="flex h-[13px] w-[13px] shrink-0 items-center justify-center border border-[#555] bg-linear-to-br from-[#dfe1e6] to-[#f6f6f6]">
      {kind === 'mixed' && <div className="h-[7px] w-[7px] bg-[#a0a0a0]" />}
      {kind === 'check' && (
        <svg viewBox="0 0 11 11" className="h-[11px] w-[11px]"><path d="M2 5.500L4.500 8.500L9 2" fill="none" stroke="#111" strokeWidth="1.800" /></svg>
      )}
    </div>
  );
}

function Row({ row }: { row: TreeRow }) {
  const Icon = row.icon === 'bars' ? BarsIcon : row.icon === 'stir' ? StirrupIcon : row.icon === 'cont' ? ContourIcon : DotsIcon;
  const left = 29 + 20 * row.level;
  return (
    <div className="relative flex h-[18px] items-center" style={{ paddingLeft: left }}>
      <div className="absolute top-[9px] w-[12px] border-t border-dotted border-[#808080]" style={{ left: left - 14 }} />
      {row.exp && (
        <div className="absolute top-[5px] flex h-[9px] w-[9px] items-center justify-center border border-[#9a9a9a] bg-linear-to-b from-white to-[#dcdcdc]" style={{ left: left - 18 }}>
          <div className="relative h-[5px] w-[5px]">
            <div className="absolute top-[2px] left-0 h-px w-[5px] bg-[#2a3f90]" />
            {row.exp === '+' && <div className="absolute top-0 left-[2px] h-[5px] w-px bg-[#2a3f90]" />}
          </div>
        </div>
      )}
      <Mark kind={row.kind} />
      <div className="ml-[3px] flex w-[15px] justify-center"><Icon /></div>
      <div
        className={row.sel
          ? 'ml-[4px] whitespace-pre border border-dotted border-[#e8a050] bg-[#0078d7] px-px text-white'
          : 'ml-[6px] whitespace-pre'}
      >
        {typeof row.text === 'string'
          ? row.text
          : row.text.map(([t, k], i) => (
              <span key={i} className={k === 'm' ? 'text-[12px]' : k === 's' ? 'align-[-2px] text-[9.5px]' : 'align-[-2px] text-[9px] text-[#222]'}>{t}</span>
            ))}
      </div>
    </div>
  );
}

function Tab({ label, icon, active }: { label: string; icon: ReactNode; active?: boolean }) {
  return (
    <div className={active
      ? 'flex h-[22px] items-center gap-[2px] rounded-b-[3px] border border-t-0 border-[#c0d4e4] bg-linear-to-b from-[#e2e6ec] to-[#f0f4f8] pr-[2px]'
      : 'flex h-[22px] items-center gap-[2px]'}>
      <svg viewBox="0 0 20 20" className="h-[16px] w-[16px]">{icon}</svg>
      <span>{label}</span>
    </div>
  );
}

/* ---------- mesh drawing ---------- */
const COLS: [number, number][] = [[721, 463], [1015, 463], [721, 903]];
const OUTLINE = 'M501 170H1088V468C1088 505 1058 537 1015 537H870C830 537 796 570 796 610V905C796 945 765 977 722 977H501Z';
const DASHED = 'M518 187H1071V468C1071 495 1050 520 1015 520H860C815 520 778 560 778 605V905C778 935 755 960 722 960H518Z';
const NODES: [number, number][] = [[501, 170], [1088, 170], [1088, 462], [1015, 537], [870, 537], [796, 610], [796, 905], [722, 977], [501, 977]];
const RING = 108;
// outer rings are squarish rather than round, grows with the radius
const shape = (r: number, t: number) => r * (1 + 0.11 * Math.min(1, r / RING) * Math.cos(4 * t + Math.PI));
const warp = (x: number, y: number): [number, number] => {
  let dx = 0;
  let dy = 0;
  for (const [cx, cy] of COLS) {
    const rx = x - cx;
    const ry = y - cy;
    const d = Math.hypot(rx, ry);
    if (d < 230 && d > 0) {
      const f = 1 - d / 230;
      dx += rx * f * 0.22;
      dy += ry * f * 0.22;
    }
  }
  return [x + dx, y + dy];
};
const nearCol = (p: [number, number]) =>
  COLS.some(([cx, cy]) => Math.hypot(p[0] - cx, p[1] - cy) < shape(RING, Math.atan2(p[1] - cy, p[0] - cx)));
// pulls the inner end of a segment back to the outer ring so grid and rings join up
const toRing = (inside: [number, number], outside: [number, number]): [number, number] => {
  let lo = 0;
  let hi = 1;
  for (let n = 0; n < 12; n++) {
    const t = (lo + hi) / 2;
    const p: [number, number] = [inside[0] + (outside[0] - inside[0]) * t, inside[1] + (outside[1] - inside[1]) * t];
    if (nearCol(p)) lo = t;
    else hi = t;
  }
  return [inside[0] + (outside[0] - inside[0]) * hi, inside[1] + (outside[1] - inside[1]) * hi];
};

function buildMesh() {
  let dotted = '';
  let solid = '';
  let yellow = '';
  const step = 36.7;
  const nx = 16;
  const ny = 22;
  const seg = (a: [number, number], b: [number, number], h: number) => {
    const ina = nearCol(a);
    const inb = nearCol(b);
    if (ina && inb) return;
    const p = ina ? toRing(a, b) : a;
    const q = inb ? toRing(b, a) : b;
    const s = `M${p[0].toFixed(1)} ${p[1].toFixed(1)}L${q[0].toFixed(1)} ${q[1].toFixed(1)}`;
    if (h % 9 === 0) solid += s;
    else if (h % 11 === 0) yellow += s;
    else dotted += s;
  };
  for (let i = 0; i <= nx; i++) {
    for (let j = 0; j <= ny; j++) {
      const p = warp(501 + i * step, 170 + j * step);
      if (i < nx) seg(p, warp(501 + (i + 1) * step, 170 + j * step), i * 3 + j * 5);
      if (j < ny) seg(p, warp(501 + i * step, 170 + (j + 1) * step), i * 5 + j * 2 + 3);
    }
  }
  const polar = (cx: number, cy: number, rings: number[], rFrom: number) => {
    const n = 16;
    const pt = (r: number, t: number) => `${(cx + shape(r, t) * Math.cos(t)).toFixed(1)} ${(cy + shape(r, t) * Math.sin(t)).toFixed(1)}`;
    rings.forEach((r, k) => {
      for (let a = 0; a < n; a++) {
        const a1 = (a / n) * 2 * Math.PI + Math.PI / 16;
        const a2 = ((a + 1) / n) * 2 * Math.PI + Math.PI / 16;
        const s = `M${pt(r, a1)}L${pt(r, a2)}`;
        if ((a + k) % 7 === 0 && r < RING) solid += s;
        else dotted += s;
      }
    });
    for (let a = 0; a < n; a++) {
      const t = (a / n) * 2 * Math.PI + Math.PI / 16;
      dotted += `M${pt(rFrom, t)}L${pt(RING, t)}`;
    }
  };
  polar(721, 463, [60, 80, RING], 60);
  polar(1015, 463, [10, 20, 32, 46, 62, 84, RING], 6);
  polar(721, 903, [10, 20, 32, 46, 62, 84, RING], 6);
  for (let k = -4; k <= 4; k++) {
    const h = 56 - Math.abs(k) * 5;
    const c = k * 13;
    dotted += `M${721 + c} ${463 - h}V${463 + h}M${721 - h} ${463 + c}H${721 + h}`;
  }
  return { dotted, solid, yellow };
}
const MESH = buildMesh();

function Column({ x, y }: { x: number; y: number }) {
  return (
    <g>
      <path d={`M${x} ${y - 14}V${y}M${x - 18} ${y}H${x}`} stroke="#00e0a0" strokeWidth="1.200" />
      <rect x={x - 7} y={y - 7} width="14" height="14" fill="#a8a8a8" stroke="#00f070" strokeWidth="1.400" />
      <circle cx={x} cy={y} r="1.800" fill="#208030" />
    </g>
  );
}

function MeshView() {
  const topTicks = [528, 581, 635, 688, 742, 795, 849, 902, 956, 1009, 1062];
  const leftTicks = [199, 256, 314, 371, 429, 487, 544, 602, 660, 717, 775, 832, 890, 948];
  return (
    <svg viewBox="374 145 864 860" className="h-[860px] w-[864px] shrink-0">
      <defs>
        <clipPath id="plate"><path d={OUTLINE} /></clipPath>
      </defs>
      <path d="M501 162H1088M501 162V170M493.500 170H501M493.500 170V977M1088 162V170" stroke="#a8ffa8" fill="none" />
      <path d={OUTLINE} fill="#0000ff" />
      <g clipPath="url(#plate)" fill="none">
        <path d={MESH.dotted} stroke="#9494ff" strokeWidth="1.200" strokeDasharray="1.500 1.100" />
        <path d={MESH.yellow} stroke="#d8d890" strokeWidth="1.100" strokeDasharray="1.200 1.600" />
        <path d={MESH.solid} stroke="#7070f2" strokeWidth="1.400" />
        <path d={DASHED} stroke="#8e8ef4" strokeWidth="1.700" strokeDasharray="8 4" />
      </g>
      <path d="M501 170H1088" stroke="#00e0c0" strokeWidth="1.200" />
      <path d="M501 170V977" stroke="#00d060" strokeWidth=".8" />
      <path d="M1088 170V468C1088 505 1058 537 1015 537H870C830 537 796 570 796 610V905C796 945 765 977 722 977H501" fill="none" stroke="#101050" strokeWidth="1" />
      {topTicks.map((x) => <path key={x} d={`M${x} 170V176`} stroke="#00e070" strokeWidth="1.500" />)}
      {leftTicks.map((y) => <path key={y} d={`M501 ${y}H508`} stroke="#00e070" strokeWidth="1.500" />)}
      {COLS.map(([x, y]) => <circle key={x + y} cx={x} cy={y} r="92" fill="none" stroke="#8c1050" strokeWidth="1" />)}
      {COLS.map(([x, y]) => <Column key={x + y} x={x} y={y} />)}
      <path d="M722 504H757M722 504l9-3M757 504l-8-4M722 504l8 5" stroke="#ff1010" strokeWidth="1.800" fill="none" />
      {NODES.map(([x, y]) => <rect key={x + y} x={x - 1.500} y={y - 1.500} width="3" height="3" fill="#a01010" />)}
    </svg>
  );
}

const STATUS: [string, string, boolean][] = [
  ['UCHOP', 'w-[44px]', false], ['RASTR', 'w-[42px]', true], ['KARTEZ', 'w-[52px]', false],
  ['OUCHOP', 'w-[54px]', false], ['VLINIE', 'w-[36px]', false], ['DXF', 'w-[27px]', false],
];

export default function App() {
  return (
    <div className="flex h-[1050px] w-[1399px] flex-col overflow-hidden border-t border-[#6e6e6e] bg-[#cfd3dc] font-['Noto_Sans',sans-serif] text-[11.4px] text-black">
      {/* title bar */}
      <div className="flex h-[30px] shrink-0 items-center bg-white">
        <svg viewBox="0 0 18 18" className="ml-[8px] h-[18px] w-[18px]">
          <path d="M2 5l7-4 7 4v8l-7 4-7-4z" fill="#777" stroke="#333" />
          <path d="M9 9l7-4v8l-7 4z" fill="#a0a0a0" />
          <text x="5" y="15" fontSize="12" fontWeight="bold" fontFamily="Liberation Sans, sans-serif" fill="#e8b020">5</text>
        </svg>
        <span className="ml-[4px] text-[11.3px] text-[#222]">RFEM 5.26.02 x64 - [rfem-file (12)*]</span>
        <div className="ml-auto flex items-center">
          <div className="flex h-[30px] w-[46px] items-center justify-center"><div className="h-px w-[10px] bg-black" /></div>
          <div className="flex h-[30px] w-[46px] items-center justify-center"><div className="h-[10px] w-[10px] border border-black" /></div>
          <div className="flex h-[30px] w-[46px] items-center justify-center">
            <svg viewBox="0 0 11 11" className="h-[11px] w-[11px]"><path d="M.5.5l10 10M10.500.5l-10 10" stroke="#000" /></svg>
          </div>
        </div>
      </div>
      {/* menu */}
      <div className="flex h-[24px] shrink-0 items-center text-[#3f3f3f]">
        <div className="ml-[4px] h-[15px] w-[2px] border-l-2 border-dotted border-[#8f95a1]" />
        <svg viewBox="0 0 18 14" className="ml-[4px] h-[14px] w-[18px]">
          <rect width="18" height="14" fill="#2a3f6f" />
          <path d="M1 9h16M9 2L3 9M9 2l6 7M9 2v10" stroke="#fff" fill="none" />
        </svg>
        <div className="ml-[9px] flex gap-[13.9px] text-[11.2px]">
          {MENU.map(([a, u, b]) => (
            <span key={a + u + b}>{a}<u>{u}</u>{b}</span>
          ))}
        </div>
        <div className="mr-[7px] ml-auto flex items-center gap-[6px] text-[#9aa0ac]">
          <div className="mt-[6px] h-[2px] w-[8px] bg-[#8a8f99]" />
          <div className="h-[8px] w-[9px] border border-t-2 border-[#8a8f99]" />
          <svg viewBox="0 0 9 9" className="h-[9px] w-[9px]"><path d="M1 1l7 7M8 1L1 8" stroke="#8a8f99" strokeWidth="1.600" /></svg>
        </div>
      </div>
      {/* toolbars */}
      <div className="flex h-[26px] shrink-0 items-center gap-[2px] pl-[4px]">
        <div className="flex h-[25px] w-[866px] items-center rounded-[3px] bg-linear-to-b from-[#f2f4f8] to-[#d8dbe4]">
          <Strip start={4} end={422} items={ROW1A} />
          <div className="flex h-[22px] w-[22px] items-center justify-center">
            <svg viewBox="0 0 20 20" className="h-[19px] w-[19px]" strokeWidth="1">{ICONS.starDown}</svg>
          </div>
          <div className="flex h-[21px] w-[216px] shrink-0 items-center bg-white">
            <span className="ml-[3px] w-[197px] overflow-hidden whitespace-nowrap text-[11.2px] text-[#222]">RF-CONCRETE Surfaces PŘ1 - Stahlbeton</span>
            <div className="ml-auto flex h-[21px] w-[14px] items-center justify-center bg-[#dde0e6]">
              <div className="h-0 w-0 border-x-[3px] border-t-[3px] border-x-transparent border-t-[#555]" />
            </div>
          </div>
          <Strip start={660} end={870} items={ROW1A2} />
        </div>
        <Strip start={872} end={1197} items={ROW1B} />
      </div>
      <div className="flex h-[26px] shrink-0 items-center gap-[2px] pl-[4px]">
        <Strip start={4} end={638} items={ROW2A} />
        <Strip start={640} end={946} items={ROW2B} />
        <Strip start={948} end={1322} items={ROW2C} />
        <Strip start={1324} end={1399} items={ROW2D} />
      </div>

      {/* main area */}
      <div className="flex h-[923px] shrink-0 gap-[4px]">
        {/* navigator */}
        <div className="flex w-[370px] shrink-0 flex-col">
          <div className="flex h-[20px] shrink-0 items-center justify-between bg-[#c6cad2] pr-[6px] pl-[5px] text-[11.2px] text-[#3f3f3f]">
            <span>Navigátor projektu - Výsledky</span>
            <div className="flex items-center gap-[8px]">
              <svg viewBox="0 0 10 11" className="h-[11px] w-[10px]"><path d="M3 1h4v5h1.500v1h-6v-1H3zM5 7v4" stroke="#555" fill="none" /></svg>
              <svg viewBox="0 0 9 9" className="h-[9px] w-[9px]"><path d="M.5.5l8 8M8.500.5l-8 8" stroke="#444" strokeWidth="1.200" /></svg>
            </div>
          </div>
          <div className="relative flex h-[876px] shrink-0 border-r-4 border-l-2 border-[#e9e9ea]">
            <div className="relative h-full flex-1 overflow-hidden bg-[#fcfcf5] pt-[2px] pl-0">
              {GUIDES.map(([x, a, b]) => (
                <div key={`${x}-${a}`} className="absolute w-px border-l border-dotted border-[#808080]" style={{ left: x - 2, top: 11 + a * 18, height: (b - a) * 18 }} />
              ))}
              <div className="-ml-[2px]">
                {ROWS.map((r, i) => <Row key={i} row={r} />)}
              </div>
              {/* annotations */}
              <div className="absolute top-[164px] left-[59px] h-[21px] w-[207px] border-2 border-[#ec1c2c]" />
              <div className="absolute top-[308px] left-[39px] h-[75px] w-[125px] border-2 border-[#ec1c2c]" />
            </div>
            <div className="flex w-[16px] shrink-0 flex-col items-center justify-between bg-[#f0f0f0] py-[8px]">
              <svg viewBox="0 0 9 6" className="h-[6px] w-[9px]"><path d="M1 5l3.500-3.500L8 5" fill="none" stroke="#555" strokeWidth="1.500" /></svg>
              <div className="absolute top-[162px] right-0 h-[17px] w-[16px] bg-[#cdcdcd]" />
              <svg viewBox="0 0 9 6" className="h-[6px] w-[9px]"><path d="M1 1l3.500 3.500L8 1" fill="none" stroke="#555" strokeWidth="1.500" /></svg>
            </div>
          </div>
          <div className="flex h-[27px] shrink-0 items-start gap-[10px] border-t border-[#9a9a9a] pl-[7px] text-[11px] text-[#555]">
            <Tab label="Data" icon={<><rect x="1" y="3" width="14" height="11" fill="#f2d66a" stroke="#8a6d1e" /><circle cx="12" cy="12" r="4" fill="#d8e6f4" stroke="#445" /><path d="M15 15l3 3" stroke="#445" strokeWidth="1.500" /></>} />
            <Tab label="Zobrazit" icon={<><rect x="3" y="5" width="13" height="13" fill="#fff" stroke="#345" /><path d="M5 9h9M5 12h9M5 15h9" stroke="#3060b0" /><path d="M5 4l8-3 4 3-3 2H6z" fill="#8c7f70" /></>} />
            <Tab label="Pohledy" icon={<><path d="M10 2l3 2-5 9 6 1c0 2-1 4-2 4H3c0-3 2-3 5-4" fill="#7a92d0" stroke="#33508c" /></>} />
            <Tab label="Výsledky" active icon={<Contour />} />
          </div>
        </div>

        {/* graphics window */}
        <div className="flex w-[864px] shrink-0 flex-col bg-white font-['Liberation_Sans',sans-serif] text-[11px] leading-[14px] text-black">
          <div className="h-[38px] shrink-0 pt-[7px] pl-[5px]">
            <div>Navržená základní výztuž a-s,1,-z (horní) [cm^2/m]</div>
            <div className="tracking-[-0.2px]">RF-CONCRETE Surfaces PŘ1 - Stahlbeton-Bemessung</div>
          </div>
          <MeshView />
          <div className="pt-[2px] pl-[5px] tracking-[-0.06px]">Max a-s,1,-z (horní): 5.24, Min a-s,1,-z (horní): 5.24 cm^2/m</div>
        </div>

        {/* panel */}
        <div className="flex w-[157px] shrink-0 flex-col">
          <div className="flex h-[20px] shrink-0 items-center justify-between bg-[#bcc1ca] pr-[6px] pl-[5px] text-[11.2px] text-[#3f3f3f]">
            <span>Panel</span>
            <div className="flex items-center gap-[8px]">
              <svg viewBox="0 0 10 11" className="h-[11px] w-[10px]"><path d="M3 1h4v5h1.500v1h-6v-1H3zM5 7v4" stroke="#666" fill="none" /></svg>
              <svg viewBox="0 0 9 9" className="h-[9px] w-[9px]"><path d="M.5.5l8 8M8.500.5l-8 8" stroke="#666" strokeWidth="1.200" /></svg>
            </div>
          </div>
          <div className="relative flex h-[876px] shrink-0 flex-col border-l-2 border-[#d8dade] bg-[#f0f0f0] px-[4px] font-['Liberation_Sans',sans-serif] text-[11.5px] leading-[14px]">
            <div className="mt-[6px] text-[10.8px]">Navržená základní výztuž</div>
            <div className="mt-[2px] h-[14px] whitespace-pre text-[12px]">
              <span>a</span><span className="align-[-1px] text-[9px]">s,1,-z (horní)</span> [cm<span className="align-[3px] text-[9px]">2</span> /m]
            </div>
            <div className="mt-[3px] flex h-[214px] w-[146px] shrink-0 items-start border-t border-[#a0a0a0] bg-[#faf8f2] pt-[10px]">
              <div className="flex h-[193px] items-center">
                <div className="relative ml-[44px] h-[193px] w-[27px] border border-black bg-[#0000ff]">
                  <div className="absolute top-[-1px] left-[26px] h-[193px] w-[6px] border-y border-black" />
                </div>
                <span className="ml-[10px]">5.24</span>
              </div>
            </div>
            <div className="mt-[10px] flex h-[36px] w-[146px] shrink-0 flex-col items-center justify-center border-y border-[#b4bcec] bg-[#f0f3f9] pl-[2px]">
              <div className="flex gap-[15px]"><span className="w-[23px]">Max:</span><span>5.24</span></div>
              <div className="mt-[4px] flex gap-[15px]"><span className="w-[23px]">Min:</span><span>5.24</span></div>
            </div>
            <div className="mt-[20px] ml-[4px] flex h-[23px] w-[138px] shrink-0 items-center justify-center border border-[#a8a8a8] bg-[#e1e1e1] text-[10.6px]">RF-CONCRETE Surfaces</div>
            <div className="absolute top-[436px] right-[5px] flex h-[21px] w-[25px] items-center justify-center border border-[#a8a8a8] bg-[#dadada]">
              <svg viewBox="0 0 18 16" className="h-[15px] w-[17px]"><path d="M1 2h12M1 5h9M1 8h7M1 11h7" stroke="#555" /><circle cx="11" cy="9" r="3.500" fill="#cfe0f4" stroke="#345f9a" /><path d="M13.500 11.500l3 3" stroke="#345f9a" strokeWidth="1.800" /></svg>
            </div>
          </div>
          <div className="flex h-[27px] shrink-0 items-center gap-[9px] border-t border-[#9a9a9a] pl-[6px]">
            <div className="flex h-[22px] w-[20px] items-center justify-center rounded-b-[3px] bg-[#eef2f6]">
              <svg viewBox="0 0 12 16" className="h-[16px] w-[12px]"><rect x="0" y="0" width="6" height="3.200" fill="#e01010" /><rect x="0" y="3.200" width="6" height="3.200" fill="#f09000" /><rect x="0" y="6.400" width="6" height="3.200" fill="#20b020" /><rect x="0" y="9.600" width="6" height="3.200" fill="#00c0e0" /><rect x="0" y="12.800" width="6" height="3.200" fill="#1010e0" /><path d="M8 1h3M8 4h3M8 7h3M8 10h3M8 13h3" stroke="#666" strokeWidth="1.500" /></svg>
            </div>
            <svg viewBox="0 0 18 16" className="h-[16px] w-[18px]"><path d="M9 1v12M2 4h14M4 14h10" stroke="#54483a" strokeWidth="1.500" /><path d="M2 4L0 10h5zM16 4l-2 6h4L16 4z" fill="#d8b060" stroke="#54483a" /></svg>
            <svg viewBox="0 0 18 18" className="ml-[3px] h-[17px] w-[18px]"><path d="M3 16h12M6 16c1-3 5-3 6-7M10 1L7 8l3 1 3-7z" fill="#777" stroke="#222" strokeWidth="1.400" /></svg>
          </div>
        </div>
      </div>

      {/* status bar */}
      <div className="relative flex min-h-0 flex-1 items-center bg-linear-to-b from-[#d2d5da] to-[#a9aeb6] pl-[5px] text-[#222]">
        <span className="font-['Liberation_Sans',sans-serif] text-[11.5px]">Hotovo</span>
        <div className="absolute top-0 left-[611px] flex h-[18px] gap-[2px] font-['Liberation_Sans',sans-serif] text-[11px] tracking-[-0.3px]">
          {STATUS.map(([t, w, up]) => (
            <div
              key={t}
              className={up
                ? `${w} flex items-center justify-center border-r border-b border-[#f4f4f4] bg-[#c8ccd2]`
                : `${w} flex items-center justify-center border border-t-[#333] border-r-white border-b-white border-l-[#333] bg-[#b8bcc4]`}
            >
              {t}
            </div>
          ))}
        </div>
        <div className="absolute top-0 left-[1072px] h-full w-px bg-[#9a9ea6]" />
        <div className="absolute top-0 left-[1160px] h-full w-px bg-[#9a9ea6]" />
        <div className="absolute top-0 left-[1234px] h-full w-px bg-[#9a9ea6]" />
        <div className="absolute top-0 left-[1308px] h-full w-px bg-[#9a9ea6]" />
      </div>
    </div>
  );
}
